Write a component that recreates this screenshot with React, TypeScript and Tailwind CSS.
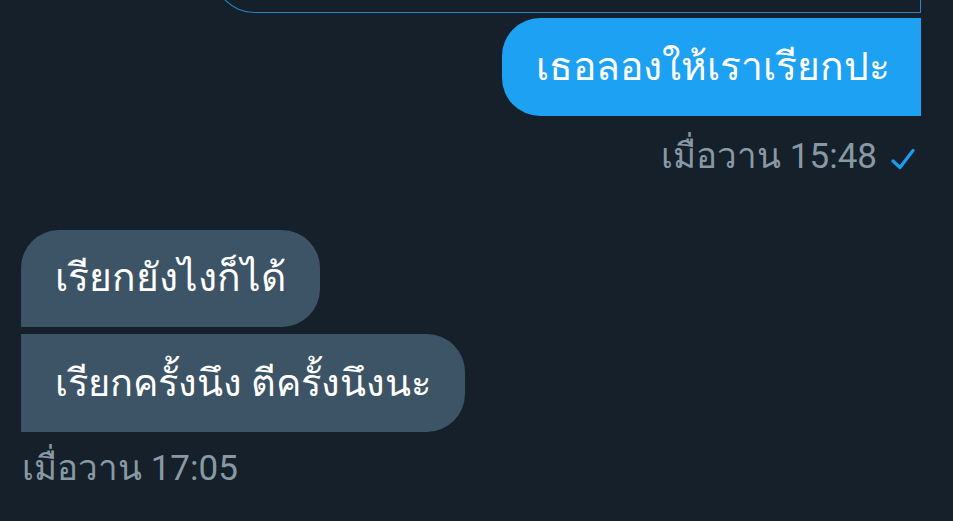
export default function App() {
  return (
    <div className="h-[521px] w-[953px] overflow-hidden bg-[#16202a] font-['Roboto','Noto_Sans',sans-serif]">
      {/* previous message, scrolled mostly out of view */}
      <div className="-mt-[48px] ml-[214px] mr-[32px] h-[61px] rounded-bl-[40px] border border-t-0 border-[#2a85c4]" />

      {/* sent */}
      <div className="mt-[5px] flex flex-col items-end pr-[32px]">
        <div className="flex h-[98px] items-center rounded-l-[38px] bg-[#1da1f2] pl-[34px] pr-[31px] text-[39px] text-white">
          เธอลองให้เราเรียกปะ
        </div>
        <div className="mt-[23px] flex items-center gap-[14px] pr-[6px] text-[35px] leading-none text-[#8899a6]">
          <span>เมื่อวาน 15:48</span>
          <svg width="24" height="22" viewBox="0 0 24 22" fill="none" className="mt-[4px]">
            <path d="M2 13 L9 19.5 L22 2.5" stroke="#1d9bf0" strokeWidth="3.2" strokeLinecap="round" strokeLinejoin="round" />
          </svg>
        </div>
      </div>

      {/* received */}
      <div className="mt-[56px] flex flex-col items-start gap-[7px] pl-[21px]">
        <div className="flex h-[97px] items-center rounded-r-[38px] rounded-tl-[38px] bg-[#3d5466] pl-[34px] pr-[34px] text-[39px] text-white">
          เรียกยังไงก็ได้
        </div>
        <div className="flex h-[98px] items-center rounded-r-[38px] bg-[#3d5466] pl-[34px] pr-[34px] text-[38px] text-white">
          เรียกครั้งนึง ตีครั้งนึงนะ
        </div>
      </div>
      <div className="mt-[19px] pl-[22px] text-[35px] leading-none text-[#8899a6]">เมื่อวาน 17:05</div>
    </div>
  );
}
